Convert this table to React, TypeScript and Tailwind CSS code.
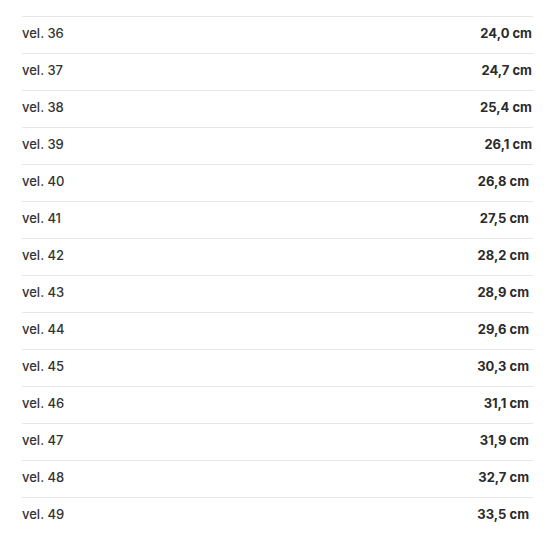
const rows: [string, string][] = [
  ["vel. 36", "24,0 cm"],
  ["vel. 37", "24,7 cm"],
  ["vel. 38", "25,4 cm"],
  ["vel. 39", "26,1 cm"],
  ["vel. 40", "26,8 cm"],
  ["vel. 41", "27,5 cm"],
  ["vel. 42", "28,2 cm"],
  ["vel. 43", "28,9 cm"],
  ["vel. 44", "29,6 cm"],
  ["vel. 45", "30,3 cm"],
  ["vel. 46", "31,1 cm"],
  ["vel. 47", "31,9 cm"],
  ["vel. 48", "32,7 cm"],
  ["vel. 49", "33,5 cm"],
];

export default function App() {
  return (
    <div className="w-[550px] h-[550px] bg-white pt-4 pl-[22px] pr-[17px] font-['Inter',sans-serif] text-[13px] text-[#333]">
      {rows.map(([size, length], i) => (
        <div
          key={size}
          className="flex h-[37px] items-center justify-between border-t border-[#e6e6e6] pb-[3px]"
        >
          <span className="font-medium">{size}</span>
          <span
            className={
              i < 4
                ? "font-bold text-[#2b2b2b] pr-[1px]"
                : "font-bold text-[#2b2b2b] pr-[4px]"
            }
          >
            {length}
          </span>
        </div>
      ))}
    </div>
  );
}
